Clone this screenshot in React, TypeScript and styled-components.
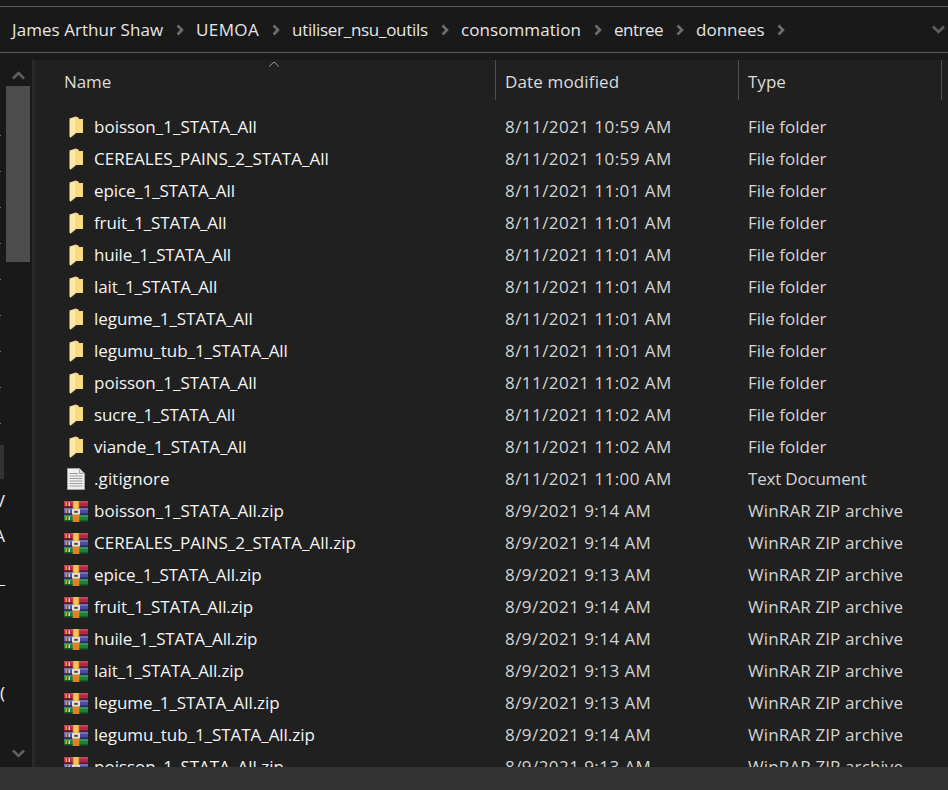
import React from "react";
import styled, { createGlobalStyle } from "styled-components";

const Global = createGlobalStyle`
  html, body { margin: 0; padding: 0; height: 790px; overflow: hidden; background: #191919; }
  #root { height: 790px; }
  * { box-sizing: border-box; }
`;

const Window = styled.div`
  width: 948px; height: 790px; display: flex; flex-direction: column; overflow: hidden;
  background: #191919; color: #fff;
  font-family: "Open Sans", "Noto Sans", "Liberation Sans", sans-serif;
  font-size: 17px;
`;
const TopStrip = styled.div`
  height: 7px; flex: none; background: #191919; border-bottom: 1px solid #5a5a5a;
`;
const AddressBar = styled.div`
  height: 46px; flex: none; display: flex; align-items: center; padding: 0 0 0 12px;
  background: #191919; border-bottom: 1px solid #5a5a5a; color: #e6e6e6; position: relative;
`;
const Crumb = styled.span<{ $w: number; $track: number }>`
  width: ${(p) => p.$w}px; flex: none; white-space: nowrap; letter-spacing: ${(p) => p.$track}px;
`;
const CrumbSep = styled.span`
  width: 33px; flex: none; display: flex; justify-content: center;
`;
const AddressEnd = styled.span`
  margin-left: auto; margin-right: 3px; display: flex;
`;
const Gap = styled.div`height: 7px; flex: none; background: #191919;`;
const Body = styled.div`flex: 1; min-height: 0; display: flex;`;
const Nav = styled.nav`
  width: 32px; flex: none; position: relative; background: #191919; overflow: hidden;
`;
const NavTick = styled.i<{ $y: number }>`
  position: absolute; left: 0; top: ${(p) => p.$y}px; width: 1px; height: 1px; background: #777;
`;
const NavSelected = styled.div`
  position: absolute; left: 0; top: 385px; width: 4px; height: 34px; background: #333;
`;
const NavFragment = styled.span<{ $y: number }>`
  position: absolute; right: 27px; top: ${(p) => p.$y}px; line-height: 22px; white-space: nowrap; color: #f0f0f0;
`;
const ScrollBtn = styled.span<{ $y: number }>`
  position: absolute; left: 12px; top: ${(p) => p.$y}px; display: flex;
`;
const Thumb = styled.div`
  position: absolute; left: 6px; top: 26px; width: 24px; height: 176px; background: #4d4d4d;
`;
const Splitter = styled.div`width: 3px; flex: none; background: #2a2a2a;`;
const Content = styled.main`
  flex: 1; min-width: 0; background: #202020; position: relative; overflow: hidden;
`;
const Header = styled.div`display: flex; height: 40px; color: #dcdcdc;`;
const HeadCell = styled.div<{ $w: number; $pad: number; $track?: number }>`
  width: ${(p) => p.$w}px; flex: none; padding-left: ${(p) => p.$pad}px; display: flex; align-items: center;
  border-right: 1px solid #4f4f4f; padding-top: 2px; letter-spacing: ${(p) => p.$track ?? 0}px;
`;
const SortCaret = styled.svg`
  position: absolute; left: 233px; top: 1px;
`;
const List = styled.div`padding-top: 11px;`;
const Row = styled.div`display: flex; height: 32px; align-items: center; padding-bottom: 2px;`;
const NameCell = styled.div`
  width: 461px; height: 32px; flex: none; align-self: flex-start; display: flex; align-items: center;
  position: relative; padding: 0 0 2px 59px; color: #f4f4f4; white-space: nowrap;
`;
const NameText = styled.span<{ $track: number }>`letter-spacing: ${(p) => p.$track}px;`;
const IconSlot = styled.span`
  position: absolute; left: 29px; top: 0; width: 24px; height: 32px; display: flex; align-items: center; justify-content: center;
`;
const DateCell = styled.div`
  width: 243px; flex: none; padding-left: 9px; color: #d4d4d4; white-space: nowrap; letter-spacing: 0.44px;
`;
const TypeCell = styled.div<{ $track: number }>`
  flex: 1; padding-left: 9px; color: #d4d4d4; white-space: nowrap; letter-spacing: ${(p) => p.$track}px;
`;
const Status = styled.footer`height: 23px; flex: none; background: #333333;`;

const Chevron = ({ color = "#6e6e6e" }: { color?: string }) => (
  <svg width="10" height="12" viewBox="0 0 10 12" fill="none">
    <path d="M2.5 1.5 L7 6 L2.5 10.5" stroke={color} strokeWidth="2.6" />
  </svg>
);
const ChevronV = ({ up }: { up?: boolean }) => (
  <svg width="13" height="10" viewBox="0 0 13 10" fill="none">
    <path d={up ? "M1 8.5 L6.5 3 L12 8.5" : "M1 1.5 L6.5 7 L12 1.5"} stroke="#5f5f5f" strokeWidth="2.6" />
  </svg>
);
const Folder = () => (
  <svg width="15" height="22" viewBox="0 0 15 22">
    <path d="M6 1 H9 L10 3 H14 V17 H6 Z" fill="#f6d67c" />
    <path d="M0.5 2.5 L7 0.5 V17 L1.5 21.5 L0.5 20.5 Z" fill="#fde9a8" />
    <path d="M7 0.5 V17 L1.5 21.5" fill="none" stroke="#e8c26a" strokeWidth="0.6" />
    <rect x="7.4" y="3" width="6.6" height="14" fill="#f8da84" />
  </svg>
);
const Doc = () => (
  <svg width="18" height="22" viewBox="0 0 18 22">
    <path d="M0.5 0.5 H12.5 L17.5 5.5 V21.5 H0.5 Z" fill="#f0f0f0" stroke="#a2a2a2" />
    <path d="M12.5 0.5 V5.5 H17.5" fill="#d8d8d8" stroke="#a2a2a2" />
    {[5, 7.5, 10, 12.5, 15, 17.5].map((y) => (
      <rect key={y} x="2.5" y={y} width={y < 7 ? 8.5 : 13} height="1" fill="#9c9c9c" />
    ))}
  </svg>
);
const Book = ({ y, hi, mid, lo }: { y: number; hi: string; mid: string; lo: string }) => (
  <>
    <rect x="0" y={y} width="24" height="2" fill={hi} />
    <rect x="0" y={y + 2} width="24" height="3" fill={mid} />
    <rect x="0" y={y + 5} width="24" height="1.6" fill={lo} />
    <rect x="1.5" y={y + 1.5} width="1.5" height="3.5" fill="#ec9f38" />
    <rect x="4.5" y={y + 1.5} width="1.5" height="3.5" fill="#d9d2c2" />
  </>
);
const Rar = () => (
  <svg width="24" height="21" viewBox="0 0 24 21">
    <Book y={0} hi="#c9405c" mid="#a92a48" lo="#7c1c34" />
    <Book y={7} hi="#6f6fc0" mid="#4d4da0" lo="#35357a" />
    <Book y={14} hi="#2e9a55" mid="#1f7d40" lo="#145a2c" />
    <rect x="8.7" y="0" width="6.6" height="21" fill="#d9842a" />
    <rect x="9.7" y="0" width="4.6" height="8" fill="#f3c456" />
    <rect x="8" y="8" width="8" height="5.5" fill="#e4e0d8" />
    <rect x="10.2" y="9.8" width="3.6" height="2" fill="#5a4230" />
  </svg>
);

type Entry = { name: string; date: string; type: string; icon: "folder" | "doc" | "rar" };
const folderRow = (name: string, date: string): Entry => ({ name, date, type: "File folder", icon: "folder" });
const rarRow = (name: string, date: string): Entry => ({ name, date, type: "WinRAR ZIP archive", icon: "rar" });
const entries: Entry[] = [
  folderRow("boisson_1_STATA_All", "8/11/2021 10:59 AM"),
  folderRow("CEREALES_PAINS_2_STATA_All", "8/11/2021 10:59 AM"),
  folderRow("epice_1_STATA_All", "8/11/2021 11:01 AM"),
  folderRow("fruit_1_STATA_All", "8/11/2021 11:01 AM"),
  folderRow("huile_1_STATA_All", "8/11/2021 11:01 AM"),
  folderRow("lait_1_STATA_All", "8/11/2021 11:01 AM"),
  folderRow("legume_1_STATA_All", "8/11/2021 11:01 AM"),
  folderRow("legumu_tub_1_STATA_All", "8/11/2021 11:01 AM"),
  folderRow("poisson_1_STATA_All", "8/11/2021 11:02 AM"),
  folderRow("sucre_1_STATA_All", "8/11/2021 11:02 AM"),
  folderRow("viande_1_STATA_All", "8/11/2021 11:02 AM"),
  { name: ".gitignore", date: "8/11/2021 11:00 AM", type: "Text Document", icon: "doc" },
  rarRow("boisson_1_STATA_All.zip", "8/9/2021 9:14 AM"),
  rarRow("CEREALES_PAINS_2_STATA_All.zip", "8/9/2021 9:14 AM"),
  rarRow("epice_1_STATA_All.zip", "8/9/2021 9:13 AM"),
  rarRow("fruit_1_STATA_All.zip", "8/9/2021 9:14 AM"),
  rarRow("huile_1_STATA_All.zip", "8/9/2021 9:14 AM"),
  rarRow("lait_1_STATA_All.zip", "8/9/2021 9:13 AM"),
  rarRow("legume_1_STATA_All.zip", "8/9/2021 9:13 AM"),
  rarRow("legumu_tub_1_STATA_All.zip", "8/9/2021 9:14 AM"),
  rarRow("poisson_1_STATA_All.zip", "8/9/2021 9:13 AM"),
];
const stemTrack: Record<string, number> = {
  epice: -0.12, fruit: -0.12, huile: -0.18, lait: -0.12, legume: -0.06, legumu: -0.05, sucre: -0.18, viande: -0.06, ".gitignore": 0.1,
};
const trackFor = (name: string) => stemTrack[name.split("_")[0]] ?? 0;
const typeTrack: Record<string, number> = { "File folder": 0, "Text Document": -0.2, "WinRAR ZIP archive": 0.12 };
const crumbs: [string, number, number][] = [
  ["James Arthur Shaw", 151, 0.06],
  ["UEMOA", 63, 0.4],
  ["utiliser_nsu_outils", 136, -0.28],
  ["consommation", 120, 0.08],
  ["entree", 49, -0.5],
  ["donnees", 68, 0],
];
const ticks = [75, 111, 147, 183, 219, 255, 291, 327, 363];

export default function App() {
  return (
    <Window>
      <Global />
      <TopStrip />
      <AddressBar>
        {crumbs.map(([c, w, t]) => (
          <React.Fragment key={c}>
            <Crumb $w={w} $track={t}>{c}</Crumb>
            <CrumbSep><Chevron /></CrumbSep>
          </React.Fragment>
        ))}
        <AddressEnd><ChevronV /></AddressEnd>
      </AddressBar>
      <Gap />
      <Body>
        <Nav>
          <ScrollBtn $y={10}><ChevronV up /></ScrollBtn>
          <Thumb />
          {ticks.map((y) => <NavTick key={y} $y={y} />)}
          <NavSelected />
          <NavFragment $y={430}>V</NavFragment>
          <NavFragment $y={465}>A</NavFragment>
          <NavFragment $y={507}>_</NavFragment>
          <NavFragment $y={622}>(</NavFragment>
          <ScrollBtn $y={689}><ChevronV /></ScrollBtn>
        </Nav>
        <Splitter />
        <Content>
          <SortCaret width="12" height="6" viewBox="0 0 12 6" fill="none">
            <path d="M1 5.5 L6 1 L11 5.5" stroke="#9a9a9a" />
          </SortCaret>
          <Header>
            <HeadCell $w={461} $pad={29} $track={-0.1}>Name</HeadCell>
            <HeadCell $w={243} $pad={9} $track={0.15}>Date modified</HeadCell>
            <HeadCell $w={203} $pad={9}>Type</HeadCell>
          </Header>
          <List>
            {entries.map((e) => (
              <Row key={e.name}>
                <NameCell>
                  <IconSlot>
                    {e.icon === "folder" ? <Folder /> : e.icon === "doc" ? <Doc /> : <Rar />}
                  </IconSlot>
                  <NameText $track={trackFor(e.name)}>{e.name}</NameText>
                </NameCell>
                <DateCell>{e.date}</DateCell>
                <TypeCell $track={typeTrack[e.type]}>{e.type}</TypeCell>
              </Row>
            ))}
          </List>
        </Content>
      </Body>
      <Status />
    </Window>
  );
}
